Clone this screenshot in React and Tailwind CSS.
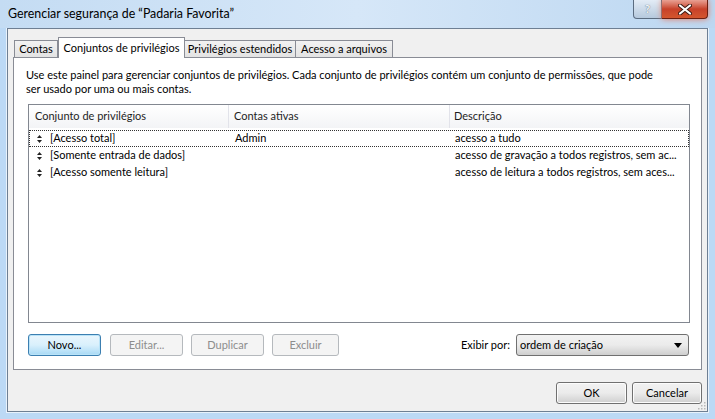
import React from "react";

const font = { fontFamily: "Lato, 'Liberation Sans', sans-serif" };

const rows = [
  { name: "[Acesso total]", accounts: "Admin", desc: "acesso a tudo", focus: true },
  { name: "[Somente entrada de dados]", accounts: "", desc: "acesso de gravação a todos registros, sem ac..." },
  { name: "[Acesso somente leitura]", accounts: "", desc: "acesso de leitura a todos registros, sem aces..." },
];

const SortIcon = () => (
  <svg width="5" height="8" viewBox="0 0 5 8" className="shrink-0">
    <path d="M2.5 0 L5 3 L0 3 Z" fill="#222" />
    <path d="M0 5 L5 5 L2.5 8 Z" fill="#222" />
  </svg>
);

const Button = ({ children, width, disabled, primary }) => (
  <div
    className={`flex shrink-0 items-center justify-center h-[22px] rounded-[3px] border text-[11px] ${
      disabled
        ? "border-[#b5b9bd] bg-[#f4f4f4] text-[#8d8d8d]"
        : primary
        ? "border-[#3c7fb1] bg-gradient-to-b from-[#eaf6fd] via-[#d9f0fc] to-[#a7d9f5] text-black shadow-[inset_0_0_0_1px_#b9e3f8]"
        : "border-[#707070] bg-gradient-to-b from-[#f2f2f2] via-[#ebebeb] to-[#cfcfcf] text-black shadow-[inset_0_0_0_1px_#fcfcfc]"
    }`}
    style={{ width }}
  >
    {children}
  </div>
);

const Tab = ({ children, selected, width }) =>
  selected ? (
    <div
      className="relative z-10 -mb-px flex h-[21px] shrink-0 items-start justify-center whitespace-nowrap border border-b-0 border-[#898c95] bg-white pt-[2px] text-[11px] text-black"
      style={{ width }}
    >
      {children}
    </div>
  ) : (
    <div
      className="flex h-[17px] shrink-0 items-center justify-center whitespace-nowrap border border-b-0 border-l-0 border-[#898c95] bg-gradient-to-b from-[#f2f2f2] to-[#e3e3e3] text-[11px] text-black first:border-l"
      style={{ width }}
    >
      {children}
    </div>
  );

export default function App() {
  return (
    <div
      className="relative flex h-[419px] w-[715px] flex-col overflow-hidden bg-[#bcd9f5]"
      style={font}
    >
      {/* title bar */}
      <div className="relative flex h-[28px] shrink-0 items-center bg-gradient-to-r from-[#c4dcf3] via-[#d6e7f8] to-[#bcd7f1] pl-[8px]">
        <span className="text-[12.4px] text-black">Gerenciar segurança de “Padaria Favorita”</span>
        <div className="absolute right-[7px] top-0 flex">
          <div className="flex h-[19px] w-[29px] items-center justify-center rounded-bl-[4px] border border-t-0 border-[#5b6c80] bg-gradient-to-b from-[#e3ecf6] to-[#b6c9dd] text-[12px] font-bold text-[#f4f6f8] [text-shadow:0_0_1px_#34455a]">
            ?
          </div>
          <div className="flex h-[19px] w-[46px] items-center justify-center rounded-br-[4px] border border-l-0 border-t-0 border-[#6b1f12] bg-gradient-to-b from-[#e8a093] via-[#c7412a] to-[#d4562e] shadow-[0_0_6px_#e7765c]">
            <svg width="14" height="11" viewBox="0 0 14 11">
              <path d="M2 1.5 L12 9.5 M12 1.5 L2 9.5" stroke="#3b1a14" strokeWidth="4" strokeLinecap="round" />
              <path d="M2 1.5 L12 9.5 M12 1.5 L2 9.5" stroke="#ffffff" strokeWidth="2.2" strokeLinecap="round" />
            </svg>
          </div>
        </div>
      </div>

      <div className="flex flex-1 px-[7px] pb-[7px]">
        {/* client area */}
        <div className="flex h-[384px] w-[701px] shrink-0 flex-col border border-[#6e7f93] bg-[#f0f0f0] px-[5px] pt-[8px] shadow-[0_0_0_1px_#e8f2fc]">
          {/* tabs */}
          <div className="flex items-end pl-[1px]">
            <Tab width={44}>Contas</Tab>
            <Tab selected width={127}>Conjuntos de privilégios</Tab>
            <Tab width={111}>Privilégios estendidos</Tab>
            <Tab width={97}>Acesso a arquivos</Tab>
          </div>

          {/* panel */}
          <div className="flex h-[313px] flex-col border border-[#898c95] bg-white pl-[14px] pr-[11px] pt-[10px]">
            <p className="ml-[-2px] whitespace-nowrap text-[11px] leading-[14px] text-black">
              Use este painel para gerenciar conjuntos de privilégios. Cada conjunto de privilégios contém um conjunto de permissões, que pode
              <br />
              ser usado por uma ou mais contas.
            </p>

            {/* list */}
            <div className="mt-[8px] flex h-[219px] flex-col border border-[#828790] bg-white">
              <div className="flex h-[23px] items-center bg-gradient-to-b from-white to-[#f3f4f6] text-[11px] text-[#1e1e1e]">
                <div className="flex h-full w-[200px] items-center border-r border-[#e2e3ea] pl-[6px]">Conjunto de privilégios</div>
                <div className="flex h-full w-[221px] items-center border-r border-[#e2e3ea] pl-[5px]">Contas ativas</div>
                <div className="flex h-full flex-1 items-center pl-[4px]">Descrição</div>
              </div>
              <div className="mt-[2px] flex flex-col">
                {rows.map((r) => (
                  <div
                    key={r.name}
                    className={`flex h-[17px] items-center text-[11px] text-black ${
                      r.focus ? "border border-dotted border-[#333]" : "border border-transparent"
                    }`}
                  >
                    <div className="flex w-[199px] items-center gap-[8px] pl-[7px]">
                      <SortIcon />
                      <span>{r.name}</span>
                    </div>
                    <div className="w-[221px] pl-[6px]">{r.accounts}</div>
                    <div className="flex-1 whitespace-nowrap pl-[5px]">{r.desc}</div>
                  </div>
                ))}
              </div>
            </div>

            {/* list buttons */}
            <div className="mt-[11px] flex items-center pr-[1px]">
              <div className="flex gap-[8px]">
                <div className="mr-[1px]">
                  <Button primary width={73}>Novo...</Button>
                </div>
                <Button disabled width={73}>Editar...</Button>
                <Button disabled width={73}>Duplicar</Button>
                <Button disabled width={67}>Excluir</Button>
              </div>
              <span className="ml-auto mr-[6px] text-[11px] text-black">Exibir por:</span>
              <div className="flex h-[22px] w-[173px] items-center justify-between rounded-[3px] border border-[#707070] bg-gradient-to-b from-[#f2f2f2] via-[#ebebeb] to-[#cfcfcf] pl-[3px] pr-[6px] text-[11px] text-black">
                <span>ordem de criação</span>
                <svg width="8" height="5" viewBox="0 0 8 5">
                  <path d="M0 0 L8 0 L4 5 Z" fill="#000" />
                </svg>
              </div>
            </div>
          </div>

          {/* dialog buttons */}
          <div className="mt-[12px] flex justify-end gap-[5px]">
            <Button width={71}>OK</Button>
            <Button width={70}>Cancelar</Button>
          </div>
          <div className="relative flex-1">
            <svg width="8" height="8" viewBox="0 0 8 8" className="absolute bottom-[1px] right-[-4px]">
              <rect x="6" y="0" width="1.5" height="1.5" fill="#b8b8b8" />
              <rect x="3" y="3" width="1.5" height="1.5" fill="#b8b8b8" />
              <rect x="6" y="3" width="1.5" height="1.5" fill="#b8b8b8" />
              <rect x="0" y="6" width="1.5" height="1.5" fill="#b8b8b8" />
              <rect x="3" y="6" width="1.5" height="1.5" fill="#b8b8b8" />
              <rect x="6" y="6" width="1.5" height="1.5" fill="#b8b8b8" />
            </svg>
          </div>
        </div>
      </div>
    </div>
  );
}
